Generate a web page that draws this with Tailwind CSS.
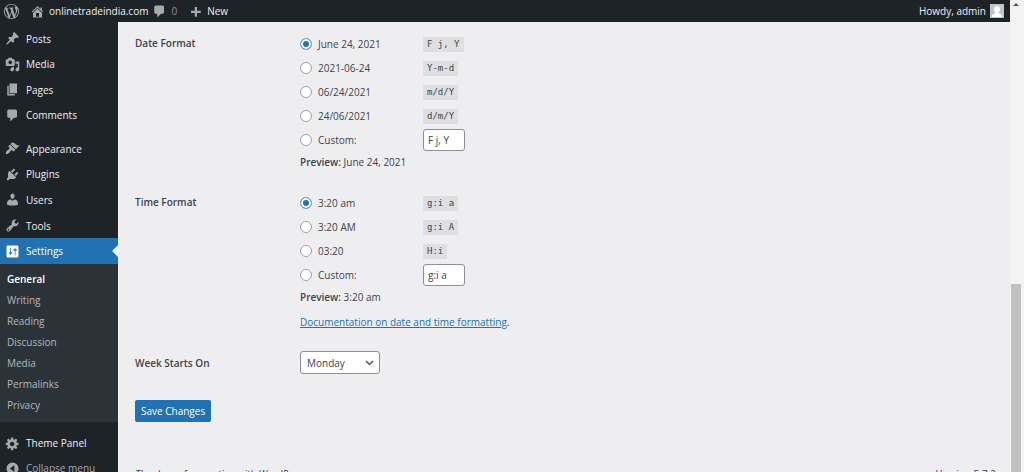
<!DOCTYPE html>
<html lang="en">
<head>
  <meta charset="UTF-8">
  <meta name="viewport" content="width=device-width, initial-scale=1.0">
  <title>General Settings - WordPress</title>
  <script src="https://cdn.jsdelivr.net/npm/@tailwindcss/browser@4"></script>
</head>
<body class="h-screen flex overflow-hidden bg-[#eeeef1] text-[#3c434a] font-['Open_Sans','Noto_Sans',sans-serif] text-[10px] leading-5">

  <div class="flex-1 min-w-0 flex flex-col">
    <!-- Admin bar -->
    <header class="h-[22px] shrink-0 bg-[#1d2327] text-[#f0f0f1] flex items-center justify-between pl-1 pr-[6px] font-medium">
      <nav class="flex items-center">
        <a href="#" aria-label="About WordPress" class="mr-[11px]">
          <svg class="size-[15px] fill-[#a7aaad]" viewBox="0 0 20 20"><path d="M20 10c0-5.51-4.49-10-10-10C4.48 0 0 4.49 0 10c0 5.52 4.48 10 10 10 5.51 0 10-4.48 10-10zM7.78 15.37L4.37 6.22c.55-.02 1.17-.08 1.17-.08.5-.06.44-1.13-.06-1.11 0 0-1.45.11-2.37.11-.18 0-.37 0-.58-.01C4.12 2.69 6.87 1.11 10 1.11c2.33 0 4.45.87 6.05 2.34-.68-.11-1.65.39-1.65 1.58 0 .74.45 1.36.9 2.1.35.61.55 1.36.55 2.46 0 1.49-1.4 5-1.4 5l-3.03-8.37c.54-.02.82-.17.82-.17.5-.05.44-1.25-.06-1.22 0 0-1.44.12-2.38.12-.87 0-2.33-.12-2.33-.12-.5-.03-.56 1.2-.06 1.22l.92.08 1.26 3.41zM17.41 10c.24-.64.74-1.87.43-4.25.7 1.29 1.05 2.71 1.05 4.25 0 3.29-1.73 6.24-4.4 7.78.97-2.59 1.94-5.2 2.92-7.78zM6.1 18.09C3.12 16.65 1.11 13.53 1.11 10c0-1.3.23-2.48.72-3.59C3.25 10.3 4.67 14.2 6.1 18.09zm4.03-6.63l2.58 6.98c-.86.29-1.76.45-2.71.45-.79 0-1.57-.11-2.29-.33.81-2.38 1.62-4.74 2.42-7.1z"/></svg>
        </a>
        <a href="#" class="flex items-center gap-1 mr-1">
          <svg class="size-[15px] fill-[#a7aaad]" viewBox="0 0 20 20"><path d="M16 8.5l1.53 1.53-1.06 1.06L10 4.6l-6.47 6.49-1.06-1.06L10 2.5l4 4v-2h2v4zm-6-2.46l6 5.99V18H4v-5.97zM12 17v-5H8v5h4z"/></svg>
          onlinetradeindia.com
        </a>
        <a href="#" class="flex items-center gap-1 mr-[11px] text-[#8c8f94]">
          <svg class="size-[15px] fill-[#a7aaad]" viewBox="0 0 20 20"><path d="M5 2h9c1.1 0 2 .9 2 2v7c0 1.1-.9 2-2 2h-2l-5 5v-5H5c-1.1 0-2-.9-2-2V4c0-1.1.9-2 2-2z"/></svg>
          0
        </a>
        <a href="#" class="flex items-center gap-1">
          <svg class="size-[15px] fill-[#a7aaad]" viewBox="0 0 20 20"><path d="M17 9v3h-5v5H9v-5H4V9h5V4h3v5h5z"/></svg>
          New
        </a>
      </nav>
      <a href="#" class="flex items-center gap-1">
        Howdy, admin
        <svg class="size-[14px]" viewBox="0 0 14 14"><path fill="#c3c4c7" d="M0 0h14v14H0z"/><path fill="#fff" d="M7 2c2 0 3 1.300 3 3.200 0 1.400-.6 2.500-1.300 3v.9c.2.8 3.300 1 3.300 3.400v.5H2v-.5c0-2.400 3.100-2.600 3.300-3.400v-.9C4.600 7.700 4 6.600 4 5.200 4 3.300 5 2 7 2z"/></svg>
      </a>
    </header>

    <div class="flex-1 min-h-0 flex">
      <!-- Admin menu -->
      <aside class="w-[118px] shrink-0 bg-[#1d2327] text-[#f0f0f1] pt-1">
        <nav>
          <div class="grid grid-rows-4 h-[102px] mb-2 font-medium">
            <a href="#" class="flex items-center gap-[6px] pl-[5px]">
              <svg class="size-[15px] fill-[#a7aaad]" viewBox="0 0 20 20"><path d="M10.44 3.02l1.82-1.82 6.36 6.35-1.83 1.82c-1.05-.68-2.48-.57-3.41.36l-.75.75c-.92.93-1.04 2.35-.35 3.41l-1.83 1.82-2.41-2.41-2.8 2.79c-.42.42-3.38 2.71-3.8 2.29s1.86-3.39 2.28-3.81l2.79-2.79L4.1 9.36l1.83-1.82c1.05.69 2.48.57 3.4-.36l.75-.75c.93-.92 1.05-2.35.36-3.41z"/></svg>
              Posts
            </a>
            <a href="#" class="flex items-center gap-[6px] pl-[5px]">
              <svg class="size-[15px] fill-[#a7aaad]" viewBox="0 0 20 20"><path d="M13 11V4c0-.55-.45-1-1-1h-1.67L9 1H5L3.67 3H2c-.55 0-1 .45-1 1v7c0 .55.45 1 1 1h10c.55 0 1-.45 1-1zM7 4.5c1.38 0 2.5 1.12 2.5 2.5S8.38 9.5 7 9.5 4.5 8.38 4.5 7 5.62 4.5 7 4.5zM14 6h5v10.500c0 1.380-1.120 2.500-2.500 2.500S14 17.880 14 16.500s1.120-2.500 2.500-2.500c.17 0 .34.02.5.05V9h-3V6zm-4 8.050V13h2v3.500c0 1.380-1.120 2.500-2.500 2.500S7 17.880 7 16.500 8.120 14 9.500 14c.17 0 .34.02.5.05z"/></svg>
              Media
            </a>
            <a href="#" class="flex items-center gap-[6px] pl-[5px]">
              <svg class="size-[15px] fill-[#a7aaad]" viewBox="0 0 20 20"><path d="M6 15V2h10v13H6zm-1 1h8v2H3V5h2v11z"/></svg>
              Pages
            </a>
            <a href="#" class="flex items-center gap-[6px] pl-[5px]">
              <svg class="size-[15px] fill-[#a7aaad]" viewBox="0 0 20 20"><path d="M5 2h9c1.1 0 2 .9 2 2v7c0 1.1-.9 2-2 2h-2l-5 5v-5H5c-1.1 0-2-.9-2-2V4c0-1.1.9-2 2-2z"/></svg>
              Comments
            </a>
          </div>

          <div class="grid grid-rows-5 h-32 font-medium">
            <a href="#" class="flex items-center gap-[6px] pl-[5px]">
              <svg class="size-[15px] fill-[#a7aaad]" viewBox="0 0 20 20"><path d="M14.48 11.06L7.41 3.99l1.5-1.5c.5-.56 2.3-.47 3.51.32 1.21.8 1.43 1.28 2.91 2.1 1.18.64 2.45 1.26 4.45.85zm-.71.71L6.7 4.7 4.93 6.47c-.39.39-.39 1.02 0 1.41l1.06 1.06c.39.39.39 1.03 0 1.42-.6.6-1.43 1.11-2.21 1.69-.35.26-.7.53-1.01.84C1.43 14.23.4 16.08 1.4 17.07c.99 1 2.84-.03 4.18-1.36.31-.31.58-.66.85-1.02.57-.78 1.08-1.61 1.69-2.21.39-.39 1.02-.39 1.41 0l1.06 1.06c.39.39 1.02.39 1.41 0z"/></svg>
              Appearance
            </a>
            <a href="#" class="flex items-center gap-[6px] pl-[5px]">
              <svg class="size-[15px] fill-[#a7aaad]" viewBox="0 0 20 20"><path d="M13.11 4.36L9.87 7.6 8 5.73l3.24-3.24c.35-.34 1.05-.2 1.56.32.52.51.66 1.21.31 1.55zm-8 1.77l.91-1.12 9.01 9.01-1.19.84c-.71.71-2.63 1.16-3.82 1.16H6.14L4.9 17.26c-.59.59-1.54.59-2.12 0-.59-.58-.59-1.53 0-2.12l1.24-1.24v-3.88c0-1.13.4-3.19 1.09-3.89zm7.26 3.97l3.24-3.24c.34-.35 1.04-.21 1.55.31.52.51.66 1.21.31 1.55l-3.24 3.25z"/></svg>
              Plugins
            </a>
            <a href="#" class="flex items-center gap-[6px] pl-[5px]">
              <svg class="size-[15px] fill-[#a7aaad]" viewBox="0 0 20 20"><path d="M10 9.25c-2.27 0-2.73-3.44-2.73-3.44C7 4.02 7.82 2 9.97 2c2.16 0 2.98 2.02 2.71 3.81 0 0-.41 3.44-2.68 3.44zm0 2.57L12.72 10c2.39 0 4.52 2.33 4.52 4.53v2.49s-3.65 1.13-7.24 1.13c-3.65 0-7.24-1.13-7.24-1.13v-2.49c0-2.25 1.94-4.48 4.47-4.48z"/></svg>
              Users
            </a>
            <a href="#" class="flex items-center gap-[6px] pl-[5px]">
              <svg class="size-[15px] fill-[#a7aaad]" viewBox="0 0 20 20"><path d="M16.68 9.77c-1.34 1.34-3.3 1.67-4.95.99l-5.41 6.52c-.99.99-2.59.99-3.58 0s-.99-2.59 0-3.57l6.52-5.42c-.68-1.65-.35-3.61.99-4.95 1.28-1.28 3.12-1.62 4.72-1.06l-2.89 2.89 2.82 2.82 2.86-2.87c.53 1.58.18 3.39-1.08 4.65zM3.81 16.21c.4.39 1.04.39 1.43 0 .4-.4.4-1.04 0-1.43-.39-.4-1.03-.4-1.43 0-.39.39-.39 1.03 0 1.43z"/></svg>
              Tools
            </a>
            <a href="#" aria-current="page" class="relative flex items-center gap-[6px] pl-[5px] bg-[#2271b1] text-white">
              <svg class="size-[15px] fill-white" viewBox="0 0 20 20"><path d="M18 16V4c0-1.1-.9-2-2-2H4c-1.1 0-2 .9-2 2v12c0 1.1.9 2 2 2h12c1.1 0 2-.9 2-2zM8 11h1c.55 0 1 .45 1 1s-.45 1-1 1H8v1.5c0 .28-.22.5-.5.5s-.5-.22-.5-.5V13H6c-.55 0-1-.45-1-1s.45-1 1-1h1V5.5c0-.28.22-.5.5-.5s.5.22.5.5V11zm5-2h-1c-.55 0-1-.45-1-1s.45-1 1-1h1V5.5c0-.28.22-.5.5-.5s.5.22.5.5V7h1c.55 0 1 .45 1 1s-.45 1-1 1h-1v5.5c0 .28-.22.5-.5.5s-.5-.22-.5-.5V9z"/></svg>
              Settings
              <svg class="absolute right-0 inset-y-0 my-auto w-[6px] h-3 fill-[#eeeef1]" viewBox="0 0 6 12"><path d="M6 0v12L0 6z"/></svg>
            </a>
          </div>

          <!-- Settings submenu -->
          <div class="flex flex-col bg-[#2c3338] text-[#b4b9be] leading-[21px] pl-[7px] pt-[5px] pb-[6px]">
            <a href="#" class="font-semibold text-white">General</a>
            <a href="#">Writing</a>
            <a href="#">Reading</a>
            <a href="#">Discussion</a>
            <a href="#">Media</a>
            <a href="#">Permalinks</a>
            <a href="#">Privacy</a>
          </div>

          <div class="pt-2">
            <a href="#" class="h-[26px] flex items-center gap-[6px] pl-[5px] font-medium">
              <svg class="size-[15px] fill-[#a7aaad]" viewBox="0 0 20 20"><path d="M18 12h-2.18c-.17.7-.44 1.35-.81 1.93l1.54 1.54-2.1 2.1-1.54-1.54c-.58.36-1.23.63-1.91.79V19H8v-2.18c-.68-.16-1.33-.43-1.91-.79l-1.54 1.54-2.12-2.12 1.54-1.54c-.36-.58-.63-1.23-.79-1.91H1V9.03h2.17c.16-.7.44-1.35.8-1.94L2.43 5.55l2.1-2.1 1.54 1.54c.58-.37 1.24-.64 1.93-.81V2h3v2.18c.68.16 1.33.43 1.91.79l1.54-1.54 2.12 2.12-1.54 1.54c.36.59.64 1.24.8 1.94H18V12zm-8.5 1.5c1.66 0 3-1.34 3-3s-1.34-3-3-3-3 1.34-3 3 1.34 3 3 3z"/></svg>
              Theme Panel
            </a>
            <button type="button" class="h-6 flex items-center gap-[6px] pl-[5px] text-[#a7aaad]">
              <svg class="size-[15px] fill-[#a7aaad]" viewBox="0 0 20 20"><path fill-rule="evenodd" d="M10 2a8 8 0 1 1 0 16 8 8 0 0 1 0-16zM12.500 5.500L6.500 10l6 4.500z"/></svg>
              Collapse menu
            </button>
          </div>
        </nav>
      </aside>

      <!-- Settings form -->
      <main class="flex-1 min-w-0 pl-[17px] pr-[14px] pt-[10px]">
        <form>
          <div class="flex" role="group" aria-labelledby="date-label">
            <h2 id="date-label" class="w-[165px] pt-px font-semibold">Date Format</h2>
            <div>
              <div class="h-6 flex items-center">
                <label class="w-[123px] flex items-center gap-[6px]"><input type="radio" name="date" checked class="appearance-none size-3 rounded-full border border-[#9ea1a6] bg-white checked:border-[#7ba4c8] checked:bg-[#2271b1] checked:shadow-[inset_0_0_0_2px_#fff]">June 24, 2021</label>
                <code class="bg-[#dfdfe1] px-1 text-[9px] leading-[15px] font-['DejaVu_Sans_Mono',monospace]">F j, Y</code>
              </div>
              <div class="h-6 flex items-center">
                <label class="w-[123px] flex items-center gap-[6px]"><input type="radio" name="date" class="appearance-none size-3 rounded-full border border-[#9ea1a6] bg-white checked:border-[#7ba4c8] checked:bg-[#2271b1] checked:shadow-[inset_0_0_0_2px_#fff]">2021-06-24</label>
                <code class="bg-[#dfdfe1] px-1 text-[9px] leading-[15px] font-['DejaVu_Sans_Mono',monospace]">Y-m-d</code>
              </div>
              <div class="h-6 flex items-center">
                <label class="w-[123px] flex items-center gap-[6px]"><input type="radio" name="date" class="appearance-none size-3 rounded-full border border-[#9ea1a6] bg-white checked:border-[#7ba4c8] checked:bg-[#2271b1] checked:shadow-[inset_0_0_0_2px_#fff]">06/24/2021</label>
                <code class="bg-[#dfdfe1] px-1 text-[9px] leading-[15px] font-['DejaVu_Sans_Mono',monospace]">m/d/Y</code>
              </div>
              <div class="h-6 flex items-center">
                <label class="w-[123px] flex items-center gap-[6px]"><input type="radio" name="date" class="appearance-none size-3 rounded-full border border-[#9ea1a6] bg-white checked:border-[#7ba4c8] checked:bg-[#2271b1] checked:shadow-[inset_0_0_0_2px_#fff]">24/06/2021</label>
                <code class="bg-[#dfdfe1] px-1 text-[9px] leading-[15px] font-['DejaVu_Sans_Mono',monospace]">d/m/Y</code>
              </div>
              <div class="h-6 flex items-center">
                <label class="w-[123px] flex items-center gap-[6px]"><input type="radio" name="date" class="appearance-none size-3 rounded-full border border-[#9ea1a6] bg-white checked:border-[#7ba4c8] checked:bg-[#2271b1] checked:shadow-[inset_0_0_0_2px_#fff]">Custom:</label>
                <input type="text" aria-label="Custom date format" value="F j, Y" class="w-[42px] h-[22px] rounded-[3px] border border-[#8c8f94] bg-white px-1">
              </div>
              <p><span class="font-semibold">Preview:</span> June 24, 2021</p>
            </div>
          </div>

          <div class="flex mt-[19px]" role="group" aria-labelledby="time-label">
            <h2 id="time-label" class="w-[165px] pt-px font-semibold">Time Format</h2>
            <div>
              <div class="h-6 flex items-center">
                <label class="w-[123px] flex items-center gap-[6px]"><input type="radio" name="time" checked class="appearance-none size-3 rounded-full border border-[#9ea1a6] bg-white checked:border-[#7ba4c8] checked:bg-[#2271b1] checked:shadow-[inset_0_0_0_2px_#fff]">3:20 am</label>
                <code class="bg-[#dfdfe1] px-1 text-[9px] leading-[15px] font-['DejaVu_Sans_Mono',monospace]">g:i a</code>
              </div>
              <div class="h-6 flex items-center">
                <label class="w-[123px] flex items-center gap-[6px]"><input type="radio" name="time" class="appearance-none size-3 rounded-full border border-[#9ea1a6] bg-white checked:border-[#7ba4c8] checked:bg-[#2271b1] checked:shadow-[inset_0_0_0_2px_#fff]">3:20 AM</label>
                <code class="bg-[#dfdfe1] px-1 text-[9px] leading-[15px] font-['DejaVu_Sans_Mono',monospace]">g:i A</code>
              </div>
              <div class="h-6 flex items-center">
                <label class="w-[123px] flex items-center gap-[6px]"><input type="radio" name="time" class="appearance-none size-3 rounded-full border border-[#9ea1a6] bg-white checked:border-[#7ba4c8] checked:bg-[#2271b1] checked:shadow-[inset_0_0_0_2px_#fff]">03:20</label>
                <code class="bg-[#dfdfe1] px-1 text-[9px] leading-[15px] font-['DejaVu_Sans_Mono',monospace]">H:i</code>
              </div>
              <div class="h-6 flex items-center">
                <label class="w-[123px] flex items-center gap-[6px]"><input type="radio" name="time" class="appearance-none size-3 rounded-full border border-[#9ea1a6] bg-white checked:border-[#7ba4c8] checked:bg-[#2271b1] checked:shadow-[inset_0_0_0_2px_#fff]">Custom:</label>
                <input type="text" aria-label="Custom time format" value="g:i a" class="w-[42px] h-[22px] rounded-[3px] border border-[#8c8f94] bg-white px-1">
              </div>
              <p><span class="font-semibold">Preview:</span> 3:20 am</p>
              <p class="mt-[5px]"><a href="#" class="text-[#2271b1] underline">Documentation on date and time formatting</a>.</p>
            </div>
          </div>

          <div class="flex items-center mt-[19px]">
            <label for="week-start" class="w-[165px] font-semibold">Week Starts On</label>
            <div class="relative">
              <select id="week-start" class="appearance-none w-20 h-[23px] rounded-[3px] border border-[#8c8f94] bg-white pl-[6px]">
                <option>Sunday</option>
                <option selected>Monday</option>
                <option>Tuesday</option>
                <option>Wednesday</option>
                <option>Thursday</option>
                <option>Friday</option>
                <option>Saturday</option>
              </select>
              <svg class="absolute right-[6px] inset-y-0 my-auto w-[9px] h-[6px] pointer-events-none" viewBox="0 0 9 6" fill="none" stroke="#50575e" stroke-width="1.500"><path d="M1 1l3.500 3.500L8 1"/></svg>
            </div>
          </div>

          <button type="submit" class="block mt-[26px] h-[22px] px-[6px] rounded-[2px] bg-[#2271b1] text-white">Save Changes</button>
        </form>

        <footer class="flex justify-between mt-[42px]">
          <p class="italic whitespace-nowrap">Thank you for creating with <a href="#">WordPress</a>.</p>
          <p>Version 5.7.2</p>
        </footer>
      </main>
    </div>
  </div>

  <!-- Page scrollbar -->
  <div class="w-[14px] shrink-0 bg-[#f3f3f4] flex flex-col items-center pt-[3px] pr-[2px]">
    <svg class="w-[6px] h-[3px] fill-[#505050]" viewBox="0 0 6 3"><path d="M0 3l3-3 3 3z"/></svg>
    <div class="mt-[278px] flex-1 w-[10px] bg-[#c1c1c1]"></div>
  </div>
</body>
</html>
